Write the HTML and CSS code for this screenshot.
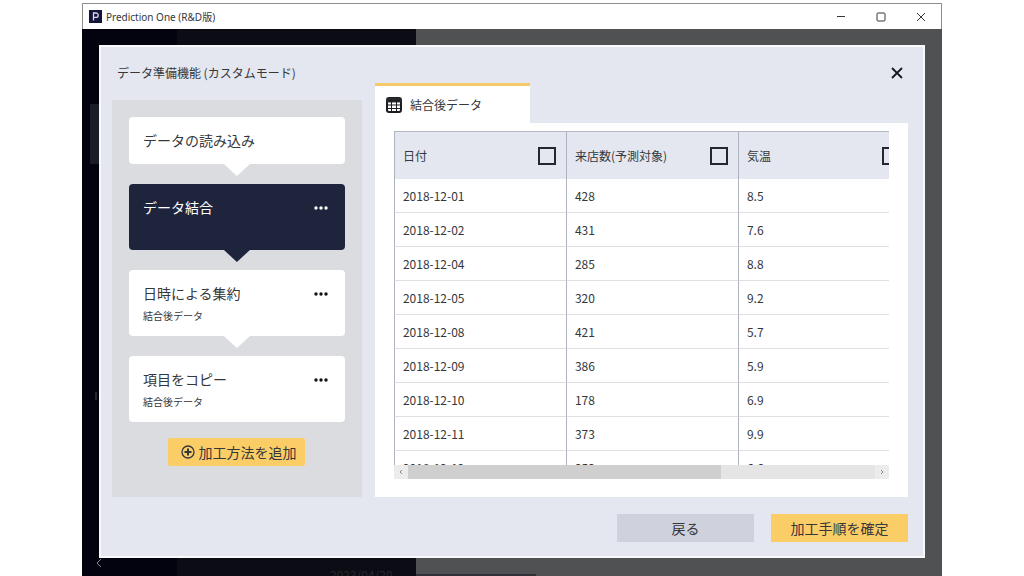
FILE: index.html
```html
<!DOCTYPE html>
<html lang="ja">
<head>
<meta charset="utf-8">
<title>Prediction One (R&amp;D版)</title>
<link rel="stylesheet" href="styles.css">
</head>
<body>
<div class="window">
  <header class="titlebar">
    <svg class="app-icon" viewBox="0 0 13 13" aria-hidden="true"><rect width="13" height="13" fill="#14143a"/><path d="M4.5 10.5V3H7a2.2 2.2 0 0 1 0 4.4H4.5" fill="none" stroke="#d8d8e6" stroke-width="1.3"/></svg>
    <span class="app-name">Prediction One (R&amp;D版)</span>
    <div class="window-controls">
      <button type="button" aria-label="最小化"><svg viewBox="0 0 10 10"><path d="M1 4.500H9"/></svg></button>
      <button type="button" aria-label="最大化"><svg viewBox="0 0 10 10"><rect x="1" y="1" width="8" height="8" rx="1"/></svg></button>
      <button type="button" aria-label="閉じる"><svg viewBox="0 0 10 10"><path d="M1 1L9 9M9 1L1 9"/></svg></button>
    </div>
  </header>
  <div class="workspace">
    <span class="rail-item"></span>
    <svg class="rail-mark" viewBox="0 0 3 8" aria-hidden="true"><path d="M1 0V8"/></svg>
    <svg class="rail-back" viewBox="0 0 8 10" aria-hidden="true"><path d="M6 1L2 5L6 9"/></svg>
    <span class="rail-date">2023/04/20</span>
    <span class="list-line"></span>
    <main class="dialog" role="dialog" aria-labelledby="dialog-title">
      <div class="dialog-head">
        <h1 id="dialog-title" class="dialog-title">データ準備機能 (カスタムモード)</h1>
        <button type="button" class="dialog-close" aria-label="閉じる"><svg viewBox="0 0 14 14"><path d="M2 2L12 12M12 2L2 12"/></svg></button>
      </div>
      <div class="dialog-body">
        <section class="flow">
          <ol class="steps">
            <li class="step step-source"><span class="step-name">データの読み込み</span></li>
            <li class="step step-active"><span class="step-name">データ結合</span><button type="button" class="more" aria-label="メニュー"><svg viewBox="0 0 16 4"><circle cx="3" cy="2" r="1.7"/><circle cx="8" cy="2" r="1.7"/><circle cx="13" cy="2" r="1.7"/></svg></button></li>
            <li class="step"><span class="step-name">日時による集約</span><button type="button" class="more" aria-label="メニュー"><svg viewBox="0 0 16 4"><circle cx="3" cy="2" r="1.7"/><circle cx="8" cy="2" r="1.7"/><circle cx="13" cy="2" r="1.7"/></svg></button><span class="step-data">結合後データ</span></li>
            <li class="step"><span class="step-name">項目をコピー</span><button type="button" class="more" aria-label="メニュー"><svg viewBox="0 0 16 4"><circle cx="3" cy="2" r="1.7"/><circle cx="8" cy="2" r="1.7"/><circle cx="13" cy="2" r="1.7"/></svg></button><span class="step-data">結合後データ</span></li>
          </ol>
          <button type="button" class="button button-add"><svg viewBox="0 0 14 14" aria-hidden="true"><circle cx="7" cy="7" r="6" stroke-width="1.3"/><path d="M7 3.5V10.5M3.5 7H10.5" stroke-width="2"/></svg>加工方法を追加</button>
        </section>
        <section class="preview">
          <button type="button" class="tab"><svg viewBox="0 0 16 16" aria-hidden="true"><rect x="1" y="1" width="14" height="14" rx="2" fill="#fff" stroke="#1c1d20" stroke-width="2"/><path d="M1 2H15V5H1Z" fill="#1c1d20"/><path d="M5.500 4V15M10.500 4V15M1 8H15M1 11.500H15" stroke="#1c1d20"/></svg>結合後データ</button>
          <div class="pane">
            <div class="table-view">
              <table>
                <thead>
                  <tr>
                    <th scope="col"><label class="column-head">日付<input type="checkbox"></label></th>
                    <th scope="col"><label class="column-head">来店数(予測対象)<input type="checkbox"></label></th>
                    <th scope="col"><label class="column-head">気温<input type="checkbox"></label></th>
                  </tr>
                </thead>
                <tbody>
                  <tr><td>2018-12-01</td><td>428</td><td>8.5</td></tr>
                  <tr><td>2018-12-02</td><td>431</td><td>7.6</td></tr>
                  <tr><td>2018-12-04</td><td>285</td><td>8.8</td></tr>
                  <tr><td>2018-12-05</td><td>320</td><td>9.2</td></tr>
                  <tr><td>2018-12-08</td><td>421</td><td>5.7</td></tr>
                  <tr><td>2018-12-09</td><td>386</td><td>5.9</td></tr>
                  <tr><td>2018-12-10</td><td>178</td><td>6.9</td></tr>
                  <tr><td>2018-12-11</td><td>373</td><td>9.9</td></tr>
                  <tr><td>2018-12-12</td><td>353</td><td>6.6</td></tr>
                </tbody>
              </table>
            </div>
            <div class="scrollbar">
              <button type="button" aria-label="左へ"><svg viewBox="0 0 6 6"><path d="M4 1L2 3L4 5"/></svg></button>
              <div class="track"><div class="thumb"></div></div>
              <button type="button" aria-label="右へ"><svg viewBox="0 0 6 6"><path d="M2 1L4 3L2 5"/></svg></button>
            </div>
          </div>
        </section>
      </div>
      <footer class="dialog-foot">
        <button type="button" class="button button-back">戻る</button>
        <button type="button" class="button">加工手順を確定</button>
      </footer>
    </main>
  </div>
</div>
</body>
</html>
```

FILE: styles.css
```css
* { box-sizing: border-box; }
body {
  margin: 0;
  height: 100vh;
  padding: 3px 8% 0;
  display: flex;
  background: #fff;
  color: #35373b;
  font: 12px/20px "Noto Sans CJK JP", sans-serif;
}
button {
  border: 0;
  padding: 0;
  background: none;
  color: inherit;
  font: inherit;
}
svg { display: block; fill: none; stroke: currentColor; }
.window {
  flex: 1;
  min-width: 0;
  display: flex;
  flex-direction: column;
}
.titlebar {
  height: 26px;
  display: flex;
  align-items: center;
  gap: 4px;
  padding: 0 15px 0 6px;
  border: 1px solid #8d8d8d;
  border-bottom: 0;
  font: 10px/20px "Noto Sans", "Noto Sans CJK JP", sans-serif;
}
.app-icon { width: 13px; height: 13px; stroke: none; }
.app-name { flex: 1; }
.window-controls { display: flex; gap: 30px; }
.window-controls svg { width: 10px; height: 10px; }
.workspace {
  position: relative;
  flex: 1;
  min-height: 0;
  display: flex;
  padding: 16px 17px 18px;
  overflow: hidden;
  background: linear-gradient(90deg, #02030f 95px, #0b0c14 95px, #0b0c14 334px, #505153 334px);
}
.rail-item {
  position: absolute;
  left: 8px;
  top: 75px;
  width: 20px;
  height: 60px;
  background: #1b1c29;
}
.rail-mark { position: absolute; left: 13px; top: 363px; width: 3px; height: 8px; color: #4a4b55; }
.rail-back { position: absolute; left: 13px; bottom: 8px; width: 8px; height: 10px; color: #8b8c92; }
.rail-date { position: absolute; left: 248px; bottom: -9px; color: #25262f; }
.list-line {
  position: absolute;
  left: 334px;
  bottom: 0;
  width: 120px;
  height: 2px;
  background: #33313a;
}
.dialog {
  position: relative;
  flex: 1;
  min-width: 0;
  display: flex;
  flex-direction: column;
  padding: 16px 15px 14px 11px;
  border: 2px solid #f8f9fb;
  background: #e4e7ef;
}
.dialog-head {
  display: flex;
  justify-content: space-between;
  padding-left: 5px;
}
.dialog-title { margin: 0; font-size: 12px; font-weight: 400; }
.dialog-close { width: 22px; display: grid; place-items: center; color: #17191d; }
.dialog-close svg { width: 14px; height: 14px; stroke-width: 1.8; }
.dialog-body {
  flex: 1;
  min-height: 0;
  display: grid;
  grid-template-columns: 250px minmax(0, 1fr);
  grid-template-rows: minmax(0, 1fr);
  gap: 13px;
}
.flow {
  margin-top: 17px;
  padding: 17px;
  background: #dbdce0;
  display: flex;
  flex-direction: column;
  align-items: center;
  gap: 16px;
}
.steps {
  align-self: stretch;
  margin: 0;
  padding: 0;
  list-style: none;
  display: grid;
  gap: 20px;
}
.step {
  position: relative;
  min-height: 66px;
  display: grid;
  grid-template-columns: 1fr auto;
  align-content: start;
  align-items: center;
  row-gap: 3px;
  padding: 13px 16px 10px 14px;
  border-radius: 4px;
  background: #fff;
}
.step-source { min-height: 47px; }
.step:not(:last-child)::after {
  content: "";
  position: absolute;
  top: 100%;
  left: 50%;
  width: 26px;
  height: 12px;
  margin-left: -13px;
  background: inherit;
  clip-path: polygon(0 0, 100% 0, 50% 100%);
}
.step-active { background: #1f243d; color: #fff; }
.step-name { font-size: 14px; }
.step-data { font-size: 10px; }
.more { padding-top: 2px; }
.more svg { width: 16px; height: 4px; fill: currentColor; stroke: none; }
.step:not(.step-active) .more { color: #111; }
.button {
  width: 137px;
  height: 28px;
  background: #fbcd67;
  font-size: 14px;
}
.button-add {
  display: flex;
  align-items: center;
  justify-content: center;
  gap: 3px;
  padding-left: 4px;
  border-radius: 2px;
}
.button-add svg { width: 14px; height: 14px; }
.button-back { background: #cfd2dc; }
.preview { display: flex; flex-direction: column; align-items: flex-start; }
.tab {
  width: 155px;
  height: 40px;
  display: flex;
  align-items: center;
  gap: 8px;
  padding-left: 11px;
  border-top: 3px solid #f5c868;
  background: #fff;
}
.tab svg { width: 16px; height: 16px; }
.pane {
  align-self: stretch;
  flex: 1;
  min-height: 0;
  display: flex;
  flex-direction: column;
  padding: 8px 19px 18px;
  background: #fff;
}
.table-view { flex: 1; min-height: 0; overflow: hidden; }
table {
  width: 516px;
  table-layout: fixed;
  border-collapse: separate;
  border-spacing: 0;
}
th, td {
  padding: 0 8px;
  border-left: 1px solid #aeb4be;
  text-align: left;
  font-weight: 400;
}
th {
  height: 48px;
  border-top: 1px solid #b4b8c2;
  background: #e4e7ef;
}
td {
  height: 34px;
  border-bottom: 1px solid #e0e0e2;
}
.column-head { display: flex; align-items: center; justify-content: space-between; }
.column-head input {
  appearance: none;
  width: 18px;
  height: 18px;
  margin: 0 2px 0 0;
  border: 2px solid #24272d;
}
.scrollbar { height: 14px; display: flex; background: #e5e5e5; }
.scrollbar button { width: 14px; display: grid; place-items: center; background: #ececec; color: #888; }
.scrollbar svg { width: 6px; height: 6px; }
.track { flex: 1; }
.thumb { width: 67%; height: 100%; background: #cfcfcf; }
.dialog-foot {
  display: flex;
  justify-content: flex-end;
  gap: 17px;
  padding-top: 17px;
}
```
